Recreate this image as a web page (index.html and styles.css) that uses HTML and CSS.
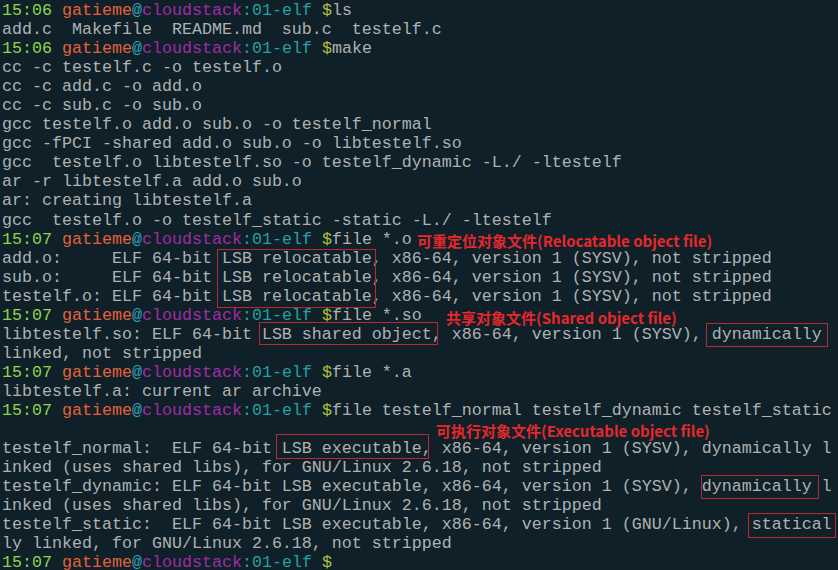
FILE: index.html
```html
<!DOCTYPE html>
<html lang="zh-CN">
<head>
<meta charset="utf-8">
<title>terminal</title>
<link rel="stylesheet" href="styles.css">
</head>
<body>
<div class="term">
<pre class="screen"><span class="t">15:06</span> <span class="u">gatieme</span><span class="at">@</span><span class="h">cloudstack</span><span class="d">:01-elf</span> <span class="p">$</span>ls
add.c  Makefile  README.md  sub.c  testelf.c
<span class="t">15:06</span> <span class="u">gatieme</span><span class="at">@</span><span class="h">cloudstack</span><span class="d">:01-elf</span> <span class="p">$</span>make
cc -c testelf.c -o testelf.o
cc -c add.c -o add.o
cc -c sub.c -o sub.o
gcc testelf.o add.o sub.o -o testelf_normal
gcc -fPCI -shared add.o sub.o -o libtestelf.so
gcc  testelf.o libtestelf.so -o testelf_dynamic -L./ -ltestelf
ar -r libtestelf.a add.o sub.o
ar: creating libtestelf.a
gcc  testelf.o -o testelf_static -static -L./ -ltestelf
<span class="t">15:07</span> <span class="u">gatieme</span><span class="at">@</span><span class="h">cloudstack</span><span class="d">:01-elf</span> <span class="p">$</span>file *.o
add.o:     ELF 64-bit LSB relocatable, x86-64, version 1 (SYSV), not stripped
sub.o:     ELF 64-bit LSB relocatable, x86-64, version 1 (SYSV), not stripped
testelf.o: ELF 64-bit LSB relocatable, x86-64, version 1 (SYSV), not stripped
<span class="t">15:07</span> <span class="u">gatieme</span><span class="at">@</span><span class="h">cloudstack</span><span class="d">:01-elf</span> <span class="p">$</span>file *.so
libtestelf.so: ELF 64-bit LSB shared object, x86-64, version 1 (SYSV), dynamically
linked, not stripped
<span class="t">15:07</span> <span class="u">gatieme</span><span class="at">@</span><span class="h">cloudstack</span><span class="d">:01-elf</span> <span class="p">$</span>file *.a
libtestelf.a: current ar archive
<span class="t">15:07</span> <span class="u">gatieme</span><span class="at">@</span><span class="h">cloudstack</span><span class="d">:01-elf</span> <span class="p">$</span>file testelf_normal testelf_dynamic testelf_static

testelf_normal:  ELF 64-bit LSB executable, x86-64, version 1 (SYSV), dynamically l
inked (uses shared libs), for GNU/Linux 2.6.18, not stripped
testelf_dynamic: ELF 64-bit LSB executable, x86-64, version 1 (SYSV), dynamically l
inked (uses shared libs), for GNU/Linux 2.6.18, not stripped
testelf_static:  ELF 64-bit LSB executable, x86-64, version 1 (GNU/Linux), statical
ly linked, for GNU/Linux 2.6.18, not stripped
<span class="t">15:07</span> <span class="u">gatieme</span><span class="at">@</span><span class="h">cloudstack</span><span class="d">:01-elf</span> <span class="p">$</span></pre>
<div class="box box-reloc"></div>
<div class="box box-shared"></div>
<div class="box box-dyn1"></div>
<div class="box box-exec"></div>
<div class="box box-dyn2"></div>
<div class="box box-static"></div>
<div class="note note-reloc">可重定位对象文件(Relocatable object file)</div>
<div class="note note-shared">共享对象文件(Shared object file)</div>
<div class="note note-exec">可执行对象文件(Executable object file)</div>
</div>
</body>
</html>
```
FILE: styles.css
```css
html, body {
  margin: 0;
  padding: 0;
  background: #0f2029;
}
.term {
  position: relative;
  width: 838px;
  height: 570px;
  overflow: hidden;
  background: #0f2029;
}
.screen {
  margin: 0;
  padding: 1px 0 0 2px;
  font-family: "Courier New", "Nimbus Mono PS", "FreeMono", "Liberation Mono", monospace;
  font-size: 16.667px;
  line-height: 19.05px;
  color: #aeb2b2;
  white-space: pre;
}
.t { color: #8fd64a; }
.u { color: #e5603a; }
.at { color: #2aa6b6; }
.h { color: #a02ba6; }
.d { color: #22a2a2; }
.p { color: #b4c03a; }

.box {
  position: absolute;
  border: 1px solid #b82a30;
  box-sizing: border-box;
}
.box-reloc { left: 217px; top: 249px; width: 159px; height: 59px; }
.box-shared { left: 259px; top: 322px; width: 179px; height: 23px; }
.box-dyn1 { left: 706px; top: 323px; width: 122px; height: 24px; }
.box-exec { left: 276px; top: 434px; width: 153px; height: 25px; }
.box-dyn2 { left: 701px; top: 475px; width: 118px; height: 24px; }
.box-static { left: 748px; top: 513px; width: 88px; height: 25px; }

.note {
  position: absolute;
  font-family: "Noto Sans CJK SC", "Noto Sans", sans-serif;
  font-weight: bold;
  font-size: 15px;
  line-height: 17px;
  color: #e5282c;
  white-space: nowrap;
}
.note-reloc { left: 417px; top: 232px; }
.note-shared { left: 446px; top: 309px; }
.note-exec { left: 436px; top: 422px; }
```
